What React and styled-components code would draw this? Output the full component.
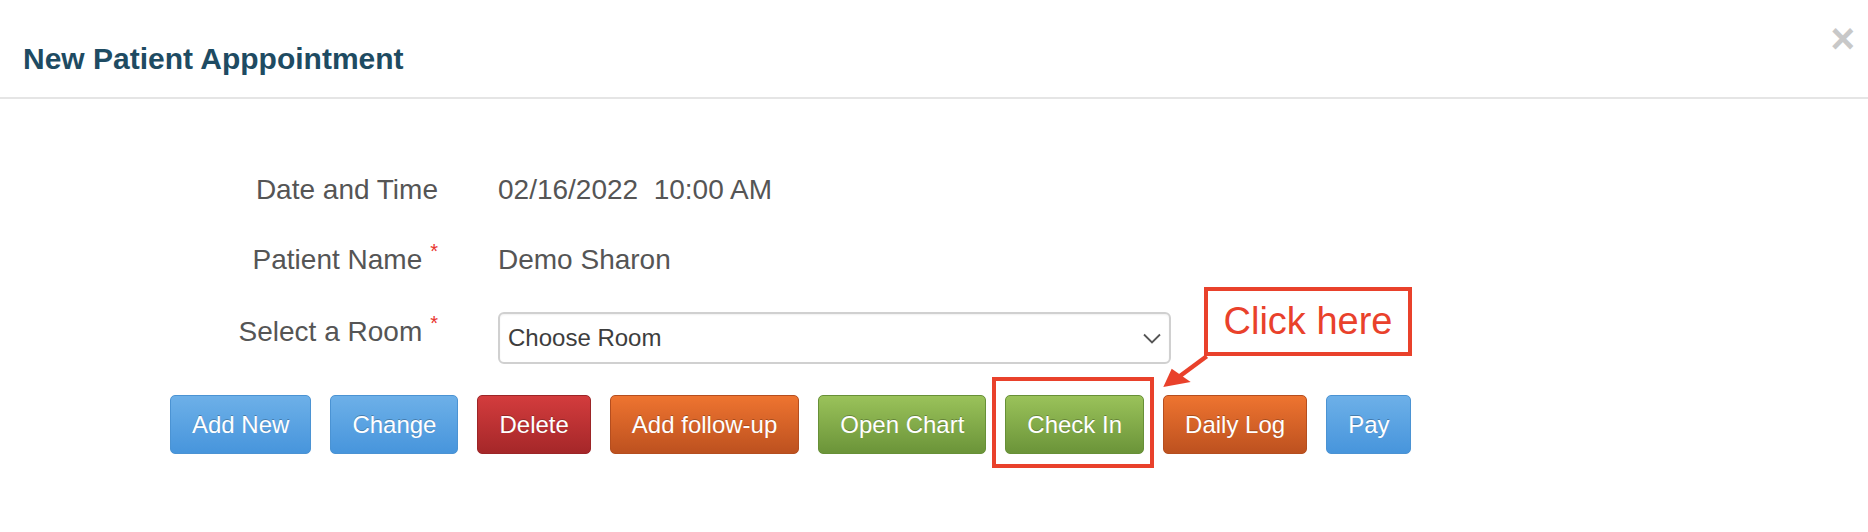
import React from 'react';
import styled, { createGlobalStyle } from 'styled-components';

const GlobalStyle = createGlobalStyle`
  body {
    margin: 0;
    background: #fff;
    font-family: 'Liberation Sans', Arial, sans-serif;
  }
`;

const annotationRed = '#e9412b';

const Page = styled.div`
  width: 1868px;
  height: 532px;
  background: #fff;
  overflow: hidden;
`;

const Header = styled.div`
  display: flex;
  justify-content: space-between;
  align-items: flex-start;
  padding: 42px 13px 22px 23px;
  border-bottom: 2px solid #e5e5e5;
`;

const Title = styled.h4`
  margin: 0;
  font-size: 30px;
  line-height: 33px;
  font-weight: bold;
  color: #1e4b62;
`;

const CloseButton = styled.button`
  border: 0;
  background: none;
  padding: 0;
  margin-top: -24px;
  font-family: 'Liberation Sans', Arial, sans-serif;
  font-size: 42px;
  line-height: 42px;
  font-weight: bold;
  color: #c8c8c8;
  cursor: pointer;
`;

const Body = styled.div`
  padding: 71px 0 0 170px;
`;

const FormGrid = styled.div`
  display: grid;
  grid-template-columns: 268px 673px;
  column-gap: 60px;
  row-gap: 30px;
`;

const Label = styled.div`
  font-size: 28px;
  line-height: 40px;
  color: #555;
  text-align: right;
  white-space: nowrap;
`;

const Required = styled.span`
  position: relative;
  top: -11px;
  margin-left: 8px;
  font-size: 20px;
  color: #e8332d;
`;

const Value = styled.div`
  font-size: 28px;
  line-height: 40px;
  color: #555;
  white-space: pre;
`;

const SelectBox = styled.div`
  box-sizing: border-box;
  height: 52px;
  display: flex;
  align-items: center;
  justify-content: space-between;
  padding: 0 8px;
  border: 2px solid #d0d0d0;
  border-radius: 6px;
  box-shadow: inset 0 1px 2px rgba(0, 0, 0, 0.06);
  font-size: 24px;
  color: #3d3d3d;
  cursor: pointer;
`;

const ButtonRow = styled.div`
  position: relative;
  display: flex;
  gap: 19px;
  margin-top: 31px;
`;

const palette = {
  blue: ['#6db0e8', '#4795dc', '#4b93d3'],
  red: ['#d33c3d', '#a52729', '#9c2527'],
  orange: ['#ee7430', '#bd511f', '#b54e1f'],
  green: ['#9ac25a', '#6b9439', '#679037'],
};

const Button = styled.button`
  box-sizing: border-box;
  height: 59px;
  padding: 0 21px;
  display: inline-flex;
  align-items: center;
  justify-content: center;
  border: 1px solid ${p => palette[p.$tone][2]};
  border-radius: 5px;
  background: linear-gradient(${p => palette[p.$tone][0]}, ${p => palette[p.$tone][1]});
  color: #fff;
  font-family: 'Liberation Sans', Arial, sans-serif;
  font-size: 24px;
  white-space: nowrap;
  text-shadow: 0 -1px 0 rgba(0, 0, 0, 0.25);
  cursor: pointer;
`;

const Highlight = styled.div`
  position: relative;
  display: flex;

  &::after {
    content: '';
    position: absolute;
    left: -13px;
    right: -10px;
    top: -18px;
    bottom: -14px;
    border: 4px solid ${annotationRed};
    pointer-events: none;
  }
`;

const Callout = styled.div`
  position: absolute;
  left: 1034px;
  top: -108px;
  box-sizing: border-box;
  width: 208px;
  height: 69px;
  display: flex;
  align-items: center;
  justify-content: center;
  border: 4px solid ${annotationRed};
  background: #fff;
  color: ${annotationRed};
  font-size: 38px;
`;

const Arrow = styled.svg`
  position: absolute;
  left: 990px;
  top: -43px;
`;

const Chevron = () => (
  <svg width="18" height="11" viewBox="0 0 18 11">
    <path d="M1 1.5 L9 9.5 L17 1.5" fill="none" stroke="#555" strokeWidth="1.8" />
  </svg>
);

const buttons = [
  ['Add New', 'blue'],
  ['Change', 'blue'],
  ['Delete', 'red'],
  ['Add follow-up', 'orange'],
  ['Open Chart', 'green'],
  ['Check In', 'green'],
  ['Daily Log', 'orange'],
  ['Pay', 'blue'],
];

const App = () => {
  return (
    <Page>
      <GlobalStyle />
      <Header>
        <Title>New Patient Apppointment</Title>
        <CloseButton aria-label="Close">×</CloseButton>
      </Header>
      <Body>
        <FormGrid>
          <Label>Date and Time</Label>
          <Value>02/16/2022  10:00 AM</Value>
          <Label>
            Patient Name<Required>*</Required>
          </Label>
          <Value>Demo Sharon</Value>
          <Label>
            Select a Room<Required>*</Required>
          </Label>
          <SelectBox>
            <span>Choose Room</span>
            <Chevron />
          </SelectBox>
        </FormGrid>
        <ButtonRow>
          {buttons.map(([text, tone]) =>
            text === 'Check In' ? (
              <Highlight key={text}>
                <Button $tone={tone}>{text}</Button>
              </Highlight>
            ) : (
              <Button key={text} $tone={tone}>
                {text}
              </Button>
            )
          )}
          <Callout>Click here</Callout>
          <Arrow width="52" height="40" viewBox="0 0 52 40">
            <line x1="46.7" y1="4.3" x2="20" y2="24" stroke={annotationRed} strokeWidth="4.5" />
            <polygon points="3.3,35 11.7,16.7 30.7,30" fill={annotationRed} />
          </Arrow>
        </ButtonRow>
      </Body>
    </Page>
  );
};

export default App;
